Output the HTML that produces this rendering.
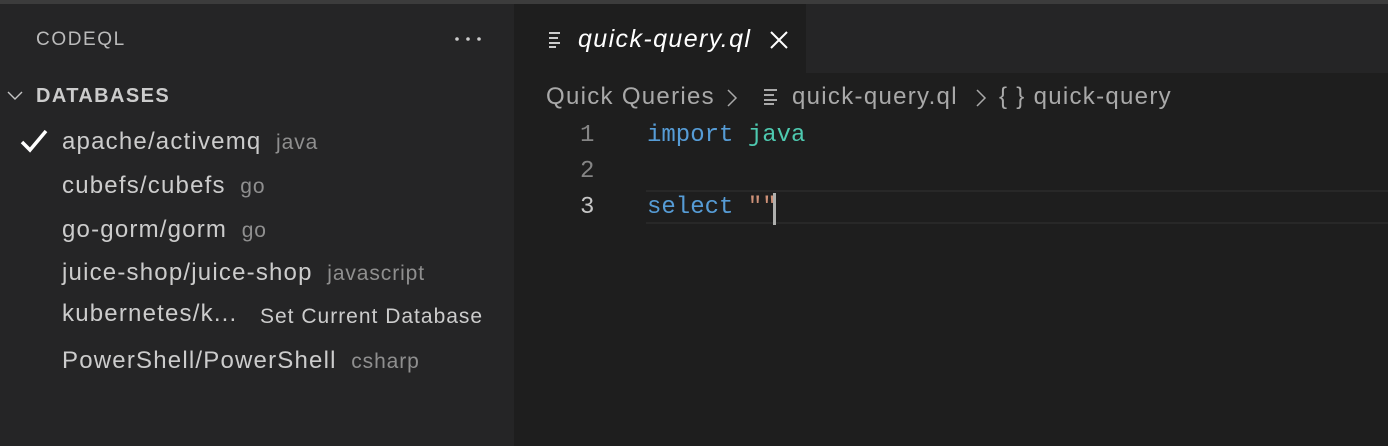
<!DOCTYPE html>
<html><head><meta charset="utf-8"><style>
body{margin:0;width:1388px;height:446px;overflow:hidden;background:#1e1e1e;font-family:"Liberation Sans",sans-serif;position:relative}
.a{position:absolute;white-space:nowrap;line-height:1}
#top{position:absolute;left:0;top:0;width:1388px;height:4px;background:#3c3c3c}
#side{position:absolute;left:0;top:4px;width:514px;height:442px;background:#252526}
#tabs{position:absolute;left:514px;top:4px;width:874px;height:69px;background:#252526}
#tab{position:absolute;left:514px;top:4px;width:292px;height:69px;background:#1e1e1e}
.it{color:#cccccc;font-size:24px;letter-spacing:1.2px}
.d{color:#8f8f8f;font-size:21px;letter-spacing:0.9px}
.m{font-family:"Liberation Mono",monospace;font-size:24px}
.bc{color:#a9a9a9;font-size:24px;letter-spacing:1.3px}
</style></head><body>
<div id="top"></div><div id="side"></div><div id="tabs"></div><div id="tab"></div>
<div class="a" style="left:36px;top:30px;color:#bbbbbb;font-size:19px;letter-spacing:1.6px">CODEQL</div>
<svg class="a" style="left:454px;top:36px" width="28" height="6"><circle cx="3" cy="3" r="1.8" fill="#ccc"/><circle cx="14" cy="3" r="1.8" fill="#ccc"/><circle cx="25" cy="3" r="1.8" fill="#ccc"/></svg>
<svg class="a" style="left:7px;top:90px" width="16" height="12"><path d="M1 2 L8 9 L15 2" stroke="#c5c5c5" stroke-width="1.4" fill="none"/></svg>
<div class="a" style="left:36px;top:86px;color:#cccccc;font-size:20px;font-weight:bold;letter-spacing:1.4px">DATABASES</div>
<svg class="a" style="left:19px;top:128px" width="30" height="26"><path d="M3 14 L11 22 L27 3" stroke="#fff" stroke-width="3.5" fill="none"/></svg>
<div class="a it" style="left:62px;top:130px">apache/activemq <span class="d">&nbsp;java</span></div>
<div class="a it" style="left:62px;top:174px">cubefs/cubefs <span class="d">&nbsp;go</span></div>
<div class="a it" style="left:62px;top:218px">go-gorm/gorm <span class="d">&nbsp;go</span></div>
<div class="a it" style="left:62px;top:261px">juice-shop/juice-shop <span class="d">&nbsp;javascript</span></div>
<div class="a it" style="left:62px;top:302px">kubernetes/k...</div>
<div class="a" style="left:260px;top:306px;color:#cccccc;font-size:21px;letter-spacing:1px">Set Current Database</div>
<div class="a it" style="left:62px;top:349px">PowerShell/PowerShell <span class="d">&nbsp;csharp</span></div>

<svg class="a" style="left:548px;top:30px" width="16" height="18"><path d="M1 3H12M1 8H10M1 13H12M1 17H8" stroke="#cccccc" stroke-width="2"/></svg>
<div class="a" style="left:578px;top:27px;color:#fff;font-size:25px;font-style:italic;letter-spacing:1.4px">quick-query.ql</div>
<svg class="a" style="left:769px;top:30px" width="20" height="20"><path d="M2 2L18 18M18 2L2 18" stroke="#fff" stroke-width="2"/></svg>

<div class="a bc" style="left:546px;top:85px">Quick Queries</div>
<svg class="a" style="left:726px;top:88px" width="12" height="20"><path d="M2 2L10 10L2 18" stroke="#a9a9a9" stroke-width="1.5" fill="none"/></svg>
<svg class="a" style="left:763px;top:88px" width="16" height="18"><path d="M1 2H14M1 7H11M1 12H14M1 16H11" stroke="#a9a9a9" stroke-width="2"/></svg>
<div class="a bc" style="left:792px;top:85px">quick-query.ql</div>
<svg class="a" style="left:975px;top:88px" width="12" height="20"><path d="M2 2L10 10L2 18" stroke="#a9a9a9" stroke-width="1.5" fill="none"/></svg>
<div class="a bc" style="left:999px;top:85px">{ } quick-query</div>

<div class="a" style="left:646px;top:190px;width:742px;height:34px;border-top:2px solid #282828;border-bottom:2px solid #282828;box-sizing:border-box"></div>
<div class="a m" style="left:580px;top:124px;color:#858585">1</div>
<div class="a m" style="left:580px;top:160px;color:#858585">2</div>
<div class="a m" style="left:580px;top:196px;color:#c6c6c6">3</div>
<div class="a m" style="left:647px;top:124px"><span style="color:#569cd6">import</span> <span style="color:#4ec9b0">java</span></div>
<div class="a m" style="left:647px;top:196px"><span style="color:#569cd6">select</span> <span style="color:#ce9178">""</span></div>
<div class="a" style="left:773px;top:193px;width:3px;height:32px;background:#aeafad"></div>
</body></html>
